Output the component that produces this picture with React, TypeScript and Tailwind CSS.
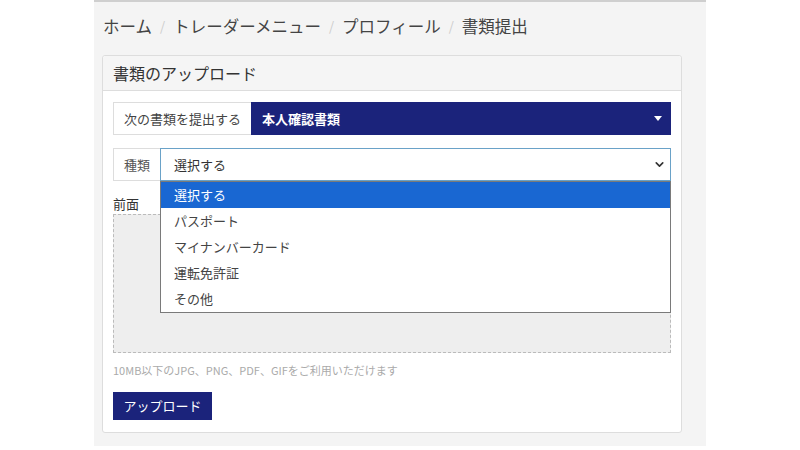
import { ChevronDown } from "lucide-react";

const options = ["選択する", "パスポート", "マイナンバーカード", "運転免許証", "その他"];

export default function App() {
  return (
    <div
      className="min-h-[450px] bg-white"
      style={{ fontFamily: '"Noto Sans CJK JP", "Noto Sans", sans-serif' }}
    >
      <div className="mx-auto w-[612px] h-[446px] bg-[#f4f4f4] border-t-2 border-[#cfcfcf] px-2">
        {/* Breadcrumb */}
        <nav className="flex items-center pt-[12px] leading-[24px] pl-px text-[16.5px] text-[#444]">
          <span>ホーム</span>
          <span className="mx-[8px] text-[#ccc] text-[13px]">/</span>
          <span>トレーダーメニュー</span>
          <span className="mx-[8px] text-[#ccc] text-[13px]">/</span>
          <span>プロフィール</span>
          <span className="mx-[8px] text-[#ccc] text-[13px]">/</span>
          <span>書類提出</span>
        </nav>

        {/* Card */}
        <div className="mt-[17px] w-[580px] bg-white border border-[#ddd] rounded-[3px]">
          <div className="h-[35px] flex items-center px-[10px] bg-[#f5f5f5] border-b border-[#ddd] text-[16px] text-[#333] rounded-t-[3px]">
            書類のアップロード
          </div>

          <div className="px-[10px] pt-[11px] pb-[12px]">
            {/* Document type */}
            <div className="flex h-[33px] text-[13px]">
              <div className="flex items-center px-[10px] border border-[#ddd] border-r-0 text-[#444] bg-white">
                次の書類を提出する
              </div>
              <div className="flex-1 flex items-center justify-between bg-[#1b237b] text-white font-semibold pl-[11px] pr-[9px]">
                <span>本人確認書類</span>
                <svg width="8" height="5" viewBox="0 0 8 5">
                  <path d="M0 0 L8 0 L4 5 Z" fill="#fff" />
                </svg>
              </div>
            </div>

            {/* Kind select */}
            <div className="relative mt-[13px] flex h-[33px] text-[13px]">
              <div className="flex items-center px-[10px] border border-[#ddd] border-r-0 text-[#555] bg-white">
                種類
              </div>
              <div className="flex-1 flex items-center justify-between border border-[#6aa2c8] bg-white pl-[13px] pr-[4px] text-[#333]">
                <span>選択する</span>
                <ChevronDown size={13} strokeWidth={3} className="text-[#333]" />
              </div>

              {/* Open dropdown */}
              <ul className="absolute left-[47px] right-0 top-[33px] z-10 bg-white border border-[#7a7a7a] text-[13px]">
                {options.map((o, i) => (
                  <li
                    key={o}
                    className={`h-[26px] flex items-center pl-[13px] ${i === 0 ? "bg-[#1967d2] text-white" : "text-[#444]"}`}
                  >
                    {o}
                  </li>
                ))}
              </ul>
            </div>

            {/* Front side */}
            <div className="mt-[13px] text-[13px] text-[#333] leading-[20px]">前面</div>
            <div className="h-[139px] bg-[#eeeeee] border border-dashed border-[#bbb]" />

            <p className="mt-[9px] text-[11px] text-[#aaa] leading-[16px]">
              10MB以下のJPG、PNG、PDF、GIFをご利用いただけます
            </p>

            <button className="mt-[14px] h-[28px] px-[10.5px] bg-[#1b237b] text-white text-[13px]">
              アップロード
            </button>
          </div>
        </div>
      </div>
    </div>
  );
}
